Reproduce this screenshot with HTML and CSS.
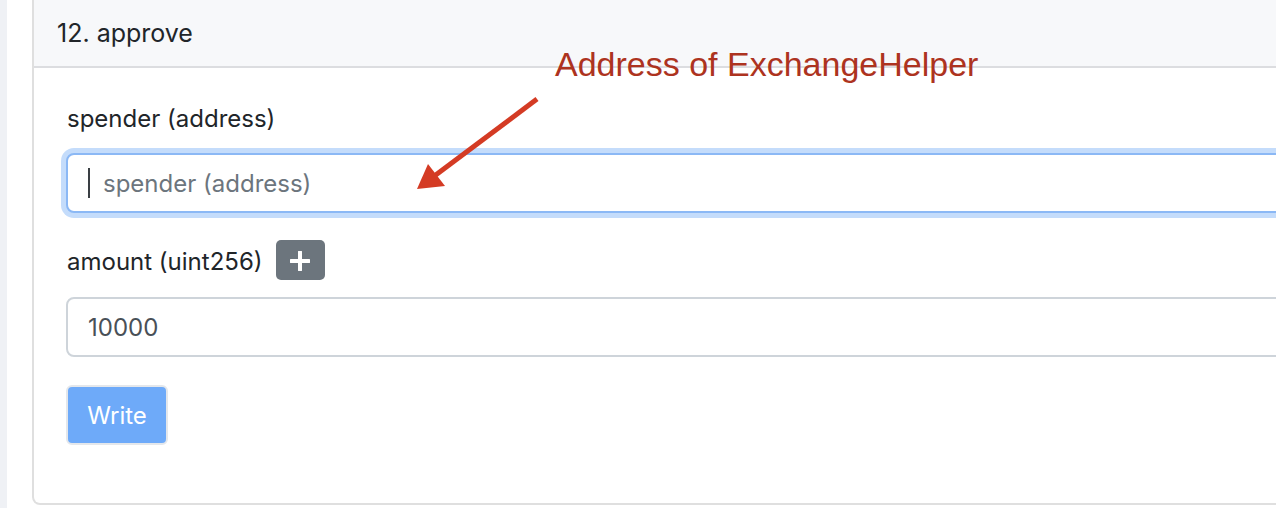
FILE: index.html
```html
<!DOCTYPE html>
<html lang="en">
<head>
<meta charset="utf-8">
<title>approve</title>
<link rel="stylesheet" href="styles.css">
</head>
<body>
<div class="page">
  <div class="edge"></div>
  <main class="main">
    <section class="card">
      <header class="card-header">12. approve</header>
      <div class="card-body">
        <div class="form-group">
          <label class="label">spender (address)</label>
          <div class="form-control focused"><span class="caret"></span><span class="placeholder">spender (address)</span></div>
        </div>
        <div class="form-group">
          <div class="label-row">
            <label class="label">amount (uint256)</label>
            <button class="btn-plus" type="button" aria-label="add">
              <svg width="20" height="20" viewBox="0 0 20 20"><path d="M10 1v18M1 10h18" stroke="#fff" stroke-width="4" stroke-linecap="round"/></svg>
            </button>
          </div>
          <div class="form-control">10000</div>
        </div>
        <button class="btn-write" type="button">Write</button>
      </div>
    </section>
  </main>
  <div class="annotation">Address of ExchangeHelper</div>
  <svg class="arrow" width="1276" height="508" viewBox="0 0 1276 508">
    <line x1="537" y1="99" x2="433" y2="177" stroke="#d43b24" stroke-width="5"/>
    <polygon points="417,189 428,164 445,186" fill="#d43b24"/>
  </svg>
</div>
</body>
</html>
```

FILE: styles.css
```css
html, body {
  margin: 0;
  padding: 0;
  background: #ffffff;
}
body {
  width: 1276px;
  height: 508px;
  overflow: hidden;
  font-family: "Inter", "Liberation Sans", sans-serif;
  color: #212529;
}
.page {
  position: relative;
  display: flex;
  width: 1276px;
  height: 508px;
  overflow: hidden;
}
.edge {
  width: 7px;
  flex: none;
  background: #eff1f5;
}
.main {
  flex: none;
  padding-left: 25px;
}
.card {
  width: 1320px;
  border: 2px solid #dfdfdf;
  border-top: none;
  border-radius: 0 0 8px 8px;
  background: #fff;
}
.card-header {
  height: 66px;
  display: flex;
  align-items: center;
  padding: 0 23px;
  font-size: 25px;
  background: #f7f8fa;
  border-bottom: 2px solid #dcdde0;
  box-sizing: content-box;
}
.card-body {
  padding: 33px 0 58px 32px;
}
.form-group {
  display: flex;
  flex-direction: column;
}
.form-group + .form-group {
  margin-top: 27px;
}
.label {
  font-size: 24px;
  line-height: 36px;
  color: #212529;
  padding-left: 1px;
}
.form-group > .label {
  margin-bottom: 16px;
}
.label-row {
  display: flex;
  align-items: flex-end;
  height: 40px;
  margin-bottom: 17px;
}
.btn-plus {
  width: 49px;
  height: 40px;
  margin-left: 13px;
  border: none;
  border-radius: 5px;
  background: #6c757d;
  padding: 0;
  display: flex;
  align-items: center;
  justify-content: center;
}
.btn-plus svg {
  margin-top: 2px;
}
.form-control {
  height: 60px;
  box-sizing: border-box;
  border: 2px solid #ced4da;
  border-radius: 8px;
  padding: 0 20px;
  display: flex;
  align-items: center;
  font-size: 24px;
  color: #495057;
  background: #fff;
}
.form-control.focused {
  border-color: #8bb8f5;
  box-shadow: 0 0 0 5px #c4dcfb;
}
.caret {
  width: 2px;
  height: 30px;
  background: #3a3f44;
  margin-right: 13px;
}
.placeholder {
  color: #6c757d;
}
.btn-write {
  margin-top: 28px;
  width: 102px;
  height: 60px;
  border: 2px solid #e4e7eb;
  border-radius: 6px;
  background: #6eaaf9;
  color: #fff;
  font-family: "Inter", "Liberation Sans", sans-serif;
  font-size: 24px;
  padding: 0;
}
.annotation {
  position: absolute;
  left: 555px;
  top: 47px;
  font-family: "Liberation Sans", sans-serif;
  font-size: 34px;
  line-height: 1;
  color: #ad3320;
  white-space: nowrap;
}
.arrow {
  position: absolute;
  left: 0;
  top: 0;
  pointer-events: none;
}
```
